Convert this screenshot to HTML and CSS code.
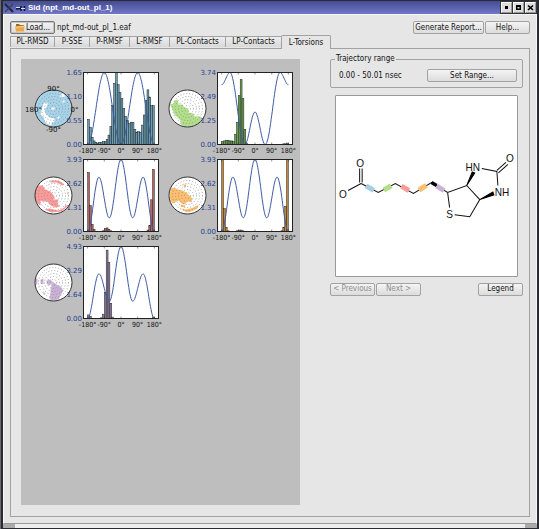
FILE: index.html
```html
<!DOCTYPE html>
<html lang="en">
<head>
<meta charset="utf-8">
<title>Sid (npt_md-out_pl_1)</title>
<link rel="stylesheet" href="styles.css">
</head>
<body>
<div class="window">
  <header class="titlebar">
    <svg class="app-icon" width="22" height="12" viewBox="0 0 22 12" aria-hidden="true">
      <path d="M1 2l8 8" stroke="#222638" stroke-width="2"/><path d="M9 2L1 10" stroke="#3a3f58" stroke-width="1.200"/>
      <path d="M12 6.500h5" stroke="#15182c" stroke-width="2"/><path d="M17 4v5M20.500 4v5" stroke="#15182c" stroke-width="1.500"/><path d="M17 6.500h4M12 5.500h4" stroke="#dfe2f4" stroke-width="1"/>
    </svg>
    <h1 class="title">Sid (npt_md-out_pl_1)</h1>
    <div class="window-buttons">
      <button class="wbtn" aria-label="Minimize"><svg width="9" height="9" viewBox="0 0 9 9"><path d="M3 3h3v3H3z"/></svg></button>
      <button class="wbtn" aria-label="Maximize"><svg width="9" height="9" viewBox="0 0 9 9"><path d="M2 2h5v5H2zM3.500 4v1.500h2V4z" fill-rule="evenodd"/></svg></button>
      <button class="wbtn" aria-label="Close"><svg width="9" height="9" viewBox="0 0 9 9"><path d="M2 2.500l5 4.500M7 2.500L2 7" stroke="#000" stroke-width="1.600"/></svg></button>
    </div>
  </header>
  <main class="content">
    <div class="toolbar">
      <button class="btn load">
        <svg width="10" height="9" viewBox="0 0 10 9" aria-hidden="true"><path d="M1 1h3l1 1h4v6H1z" fill="#9c6a25"/><path d="M0 3.500L9.500 2.500 9 8.500H1z" fill="#eba94b"/><path d="M1 4.200L9 3.400" stroke="#f8d394"/></svg>
        Load...
      </button>
      <span class="file">npt_md-out_pl_1.eaf</span>
      <button class="btn report">Generate Report...</button>
      <button class="btn">Help...</button>
    </div>
    <div class="tabs" role="tablist">
      <button class="tab t1" role="tab">PL-RMSD</button>
      <button class="tab t2" role="tab">P-SSE</button>
      <button class="tab t3" role="tab">P-RMSF</button>
      <button class="tab t3" role="tab">L-RMSF</button>
      <button class="tab t4" role="tab">PL-Contacts</button>
      <button class="tab t4" role="tab">LP-Contacts</button>
      <button class="tab active" role="tab" aria-selected="true">L-Torsions</button>
    </div>
    <div class="pane">
      <section class="plots" id="plots" aria-label="Torsion plots"></section>
      <aside class="side">
        <fieldset class="range">
          <legend>Trajectory range</legend>
          <span>0.00 - 50.01 nsec</span>
          <button class="btn">Set Range...</button>
        </fieldset>
        <div class="ligand">
          <svg viewBox="0 0 180 179" role="img" aria-label="Ligand structure">
            <g class="bond">
              <path d="M23.500 86V72M26 86V72M25 87L12 94M25 87L42 96 59 87 77 97 95 86 111 96 130 89 143 103 133 120 118 118M111 96L113 111M143 103L133 120M145 72L160 75 161 89M160 74L169 66M161.500 76.500L171 68"/>
            </g>
            <path d="M130 89L135.500 75.500 138 76.500zM143 103L156 95.500 157 98.500z" class="wedge"/>
            <path d="M95 86L100 89" stroke="#000" stroke-width="3.500"/>
            <g stroke-width="5">
              <path d="M30 89.500L37.500 93.700" stroke="#a6cee3"/><path d="M47.500 93.500L55 89.300" stroke="#b2df8a"/>
              <path d="M65 89.700L72.500 94" stroke="#fb9a99"/><path d="M82.500 93.500L90 89" stroke="#fdbf6f"/>
              <path d="M100 89.300L107.500 94" stroke="#cab2d6"/>
            </g>
            <g class="atoms">
              <text x="24" y="71">O</text><text x="7" y="101">O</text><text x="173" y="66">O</text>
              <text x="136" y="75">HN</text><text x="165" y="99">NH</text><text x="113" y="121">S</text>
            </g>
          </svg>
        </div>
        <div class="nav">
          <button class="btn" disabled>&lt; Previous</button>
          <button class="btn" disabled>Next &gt;</button>
          <button class="btn legend-btn">Legend</button>
        </div>
      </aside>
    </div>
  </main>
  <footer class="resize"></footer>
</div>
<script src="charts.js"></script>
</body>
</html>
```

FILE: styles.css
```css
* { box-sizing: border-box; }
body {
  margin: 0;
  background: #2a2c33;
  color: #111;
  font: 8px/10px "DejaVu Sans Condensed", "DejaVu Sans", sans-serif;
}
button { font: inherit; color: inherit; padding: 0; }
.window {
  display: flex;
  flex-direction: column;
  min-height: 100vh;
  padding: 1px 2px;
  border-left: 1px solid #6a6a6a;
}
.titlebar {
  display: flex;
  align-items: center;
  height: 13px;
  background: linear-gradient(#444b92, #7078c8);
}
.app-icon { margin: 0 2px 0 1px; }
.title {
  margin: 0;
  color: #fff;
  font: bold 8px/12px "Liberation Sans", sans-serif;
}
.window-buttons {
  display: flex;
  gap: 1px;
  margin-left: auto;
  padding: 1px;
  background: #33353d;
}
.wbtn {
  width: 11px;
  height: 11px;
  border: 1px solid;
  border-color: #fff #999 #999 #fff;
  background: #dedede;
  line-height: 0;
}
.content {
  flex: 1;
  display: flex;
  flex-direction: column;
  padding: 6px;
  border: 1px solid #f8f8f8;
  border-bottom-color: #999;
  background: #e6e6e6;
}
.toolbar { display: flex; align-items: center; gap: 1px; }
.btn {
  width: 45px;
  height: 13px;
  border: 1px solid #a2a2a2;
  border-radius: 2px;
  background: linear-gradient(#f4f4f4, #dcdcdc);
  white-space: nowrap;
}
.btn:disabled { color: #8f8f8f; }
.load {
  display: flex;
  align-items: center;
  justify-content: center;
  gap: 1px;
  border-color: #777;
  box-shadow: inset 0 0 0 1px #c4c4c4;
}
.file { margin: 0 auto 0 1px; }
.report { width: 71px; }
.tabs { display: flex; align-items: flex-end; height: 14px; }
.tab {
  height: 11px;
  margin-bottom: 1px;
  border: 1px solid #a2a2a2;
  border-left-width: 0;
  border-bottom: 0;
  background: linear-gradient(#eee, #d8d8d8);
  white-space: nowrap;
}
.tab:first-child { border-left-width: 1px; }
.t1 { width: 45px; }
.t2 { width: 35px; }
.t3 { width: 40px; }
.t4 { width: 56px; }
.active {
  position: relative;
  z-index: 1;
  width: 50px;
  height: 14px;
  margin: 0 0 -1px -1px;
  border-left-width: 1px;
  border-radius: 2px 2px 0 0;
  background: #e6e6e6;
}
.pane {
  flex: 1;
  display: grid;
  grid-template-columns: 279fr 193fr;
  gap: 30px;
  padding: 10px 6px 11px 10px;
  border: 1px solid #a2a2a2;
}
.plots {
  display: grid;
  grid-template-columns: 134px 134px;
  grid-auto-rows: 87px;
  align-content: start;
  padding: 7px 5px;
  background: #bebebe;
}
.chart { display: block; width: 134px; height: 87px; overflow: visible; }
.chart text { font: 7px "DejaVu Sans", sans-serif; fill: #111; text-anchor: middle; }
.chart .xlab { font-family: "DejaVu Sans Condensed", "DejaVu Sans", sans-serif; }
.chart .ylab { fill: #25418f; text-anchor: end; }
.frame { fill: none; stroke: #222; }
.curve { fill: none; stroke: #3f5ba5; stroke-width: 1; }
.ring { fill: none; stroke: #888; stroke-width: 0.8; stroke-dasharray: 1 2; }
.rim { fill: none; stroke: #333; }
.side { min-width: 0; }
.range {
  display: flex;
  align-items: center;
  justify-content: space-between;
  min-width: 0;
  margin: -5px 0 7px;
  padding: 5px 5px 5px 8px;
  border: 1px solid #a2a2a2;
  border-radius: 2px;
}
.range legend { padding: 0 1px; margin-left: -4px; }
.range .btn { width: 90px; }
.ligand {
  margin: 0 5px 6px;
  border: 1px solid #999;
  border-radius: 1px;
  background: #fff;
}
.ligand svg { display: block; width: 100%; }
.bond { fill: none; stroke: #111; stroke-width: 1; }
.wedge { fill: #000; stroke: #000; stroke-width: 1; }
.atoms text { font: 10px "Liberation Sans", sans-serif; fill: #111; text-anchor: middle; }
.nav { display: flex; gap: 1px; }
.legend-btn { margin-left: auto; }
.resize {
  height: 4px;
  border: solid #aaa;
  border-width: 0 12px;
  background: #eee;
}
```

FILE: charts.js
```js
// Histogram heights are percentages of the y range, one per 10 degree bin.
// Curves list the [angle, fraction] turning points of the torsion potential.
const triple = (side, dip) => [[-180, 0], [-119, side], [-63, dip], [0, 1], [63, dip], [119, side], [180, 0]];
const charts = [
  {
    fill: '#6c9fb5', tint: '#a6d3ea', ticks: ['0.00', '0.55', '1.10', '1.65'],
    bars: { 0: [35, 24, 10, 5, 3, 2, 3, 3, 4, 4, 7, 13, 25, 54, 85, 100, 83, 72, 64, 50, 39, 33, 29, 31, 31, 21, 17, 18, 17, 27, 41, 61, 76, 66, 54, 54] },
    curve: [[-180, 0], [-90, 1], [0, 0], [90, 1], [180, 0]],
    full: true,
    blob: 'M-10-5l4-1v3l-3 4 1 4 4 4 5 1v3l-3 1v3l-5-2-2-3-1-4-3-2zM6-12l3-3 2 1v3zM4 8h2v2H4zM-2-1h3v2h-3zM9-8h2v2H9z'
  },
  {
    fill: '#6f9f50', tint: '#b2df8a', ticks: ['0.00', '1.25', '2.49', '3.74'],
    bars: { 0: [4, 5, 6, 6, 5, 5, 4, 14, 31, 68, 90, 64, 21, 2], 33: [1, 1, 2] },
    curve: [[-180, .83], [-135, 1], [-55, 0], [0, .45], [55, 0], [135, 1], [180, .83]],
    blob: 'M-18-5l4 1 1-4 3-1 1 5 4 0 2 3 4 1v4l5 1 1 3 6 0 2 2-4 5-7 3-7 0-5-3 2-2-3-3-4-4-2-5z'
  },
  {
    fill: '#b96362', tint: '#fb9a99', ticks: ['0.00', '1.31', '2.62', '3.93'],
    bars: { 0: [82, 36, 10, 3], 8: [1, 4, 5, 3, 1], 32: [2, 8, 44, 86] },
    curve: triple(.755, .19),
    blob: 'M-18-5l3-5 4 0 3 4 5 2 4 5-1 3 5 0-1 4 2 3-4 1-5-2-3-4-5 0-2-1 0 5-3-2-3-6zM-3-15l8 0 6 4-2 1-6-3-6 0zM14-3h1v2h-1zM-9 14l5-1 9 2 6-3 1-3 2 2-6 5-10 1z'
  },
  {
    fill: '#c58436', tint: '#fdbf6f', ticks: ['0.00', '1.31', '2.62', '3.93'],
    bars: { 0: [100, 32, 6, 1], 8: [1, 2, 2, 1], 32: [1, 6, 35, 100] },
    curve: triple(.755, .19),
    blob: 'M-17-7l4-1 3 2 5 1 5 3 4 4-1 4-3 0-3 3-3-1-3-3-6 3-3-4zM-4-11l3 0-1 3-2-1zM-7 9l5 1-1 2-4-1zM-7 13l6 1 7-2 5-3-1 4-6 3-5 1zM3 2l2 1-1 4-2-1z'
  },
  {
    fill: '#957da0', tint: '#cab2d6', ticks: ['0.00', '1.64', '3.29', '4.93'],
    bars: { 0: [5, 3], 7: [1, 6, 36, 95, 78, 21, 2], 35: [2] },
    curve: triple(.62, .24),
    blob: 'M-18-4l2 0v5l-2 2zM-13-3l3-1 0 6-3-1zM-7-2l4-1 2 3-3 3-3-2zM-1-1l4 3 4 2 3 4-3 5-2 4-5 1-4-1 1-6 0-4zM-10 9l2 2-2 1z'
  }
];

const BOX = { left: 57.5, top: 6.5, width: 75, height: 72 };
const BASE = BOX.top + BOX.height;
const xOf = deg => 95 + deg * 33.4 / 180;
const yOf = v => BASE - v * BOX.height;

function curvePath(points) {
  const out = [];
  for (let d = -180; d <= 180; d += 3) {
    const i = Math.max(1, points.findIndex(p => p[0] >= d));
    const [a, va] = points[i - 1], [b, vb] = points[i];
    const v = va + (vb - va) * (1 - Math.cos(Math.PI * (d - a) / (b - a))) / 2;
    out.push(xOf(d).toFixed(1) + ' ' + yOf(v).toFixed(1));
  }
  return 'M' + out.join('L');
}

function barRects(c) {
  let s = '';
  for (const [start, list] of Object.entries(c.bars)) {
    list.forEach((h, i) => {
      const x = xOf(-180 + 10 * (Number(start) + i));
      const height = h / 100 * BOX.height;
      s += `<rect x="${x.toFixed(1)}" y="${(BASE - height).toFixed(1)}" width="1.860" height="${height.toFixed(1)}" fill="${c.fill}" stroke="#1c2626" stroke-width="0.500"/>`;
    });
  }
  return s;
}

function chartSvg(c, index) {
  let ticks = '';
  for (const d of [-180, -90, 0, 90, 180]) {
    ticks += `<path d="M${xOf(d)} ${BASE}v-2M${xOf(d)} ${BOX.top}v2" stroke="#222" stroke-width="0.500"/>`;
    ticks += `<text class="xlab" x="${xOf(d)}" y="87">${d}°</text>`;
  }
  let labels = '';
  c.ticks.forEach((t, i) => {
    labels += `<text class="ylab" x="56" y="${yOf(i / 3) + 2.5}">${t}</text>`;
  });
  const rings = [3, 6, 9, 12, 15].map(r => `<circle class="ring" r="${r}"/>`).join('');
  const names = index ? '' :
    '<text x="0" y="-18">90°</text><text x="0" y="23">-90°</text><text x="-20" y="3">180°</text><text x="21" y="3">0°</text>';
  return `<svg class="chart" viewBox="0 0 134 87" role="img" aria-label="Torsion ${index + 1}">
    <rect x="${BOX.left}" y="${BOX.top}" width="${BOX.width}" height="${BOX.height}" fill="#fff"/>
    ${barRects(c)}<path class="curve" d="${curvePath(c.curve)}"/>
    <rect class="frame" x="${BOX.left}" y="${BOX.top}" width="${BOX.width}" height="${BOX.height}"/>
    ${ticks}
    <g transform="translate(27.500 42.500)"><circle r="18.500" fill="${c.full ? c.tint : '#fff'}"/>
    <path d="${c.blob}" fill="${c.full ? '#fff' : c.tint}"/>${rings}<circle class="rim" r="18.500"/>${names}</g>
    ${labels}</svg>`;
}

document.getElementById('plots').innerHTML = charts.map(chartSvg).join('');
```
